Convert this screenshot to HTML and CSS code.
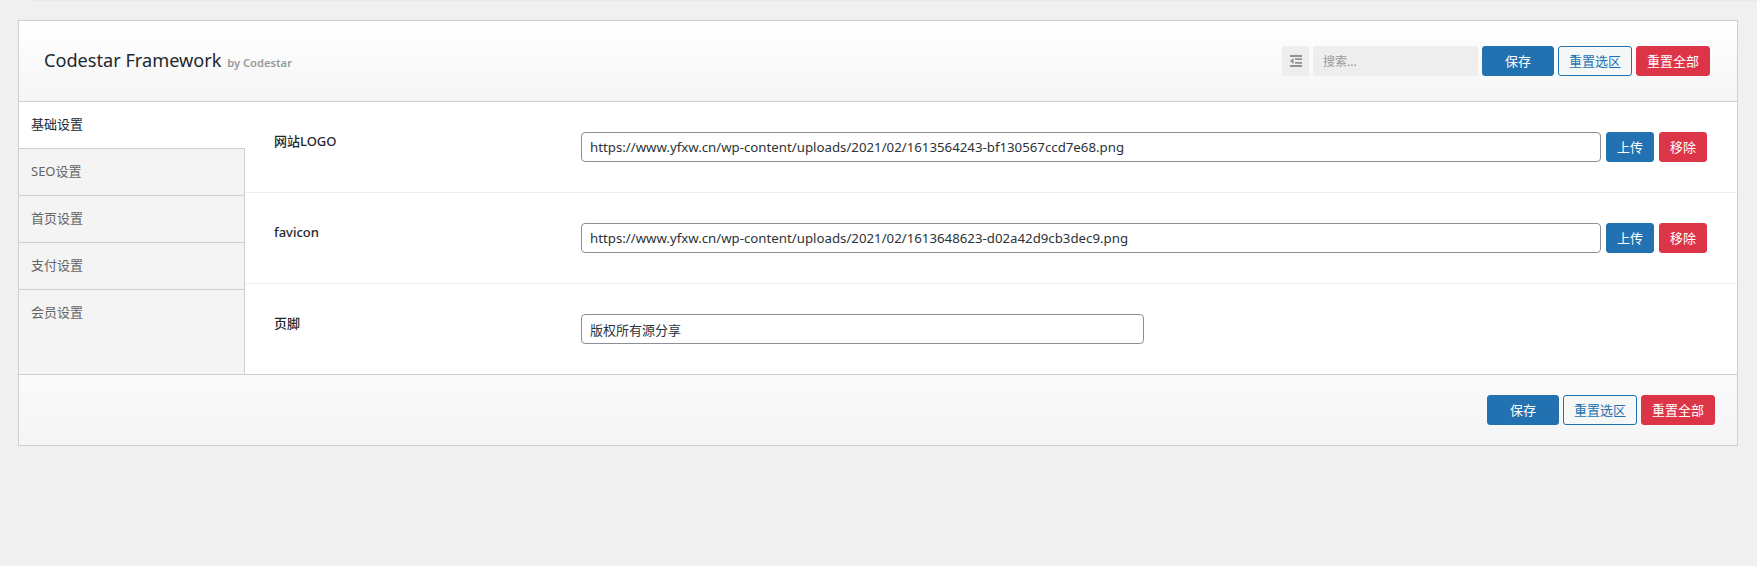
FILE: index.html
```html
<!DOCTYPE html>
<html lang="zh">
<head>
<meta charset="utf-8">
<title>Codestar Framework</title>
<link rel="stylesheet" href="styles.css">
</head>
<body>
<div class="topstrip"></div>
<div class="panel">
  <header class="bar header">
    <h1 class="title">Codestar Framework <small>by Codestar</small></h1>
    <div class="actions">
      <span class="expand"><svg width="12" height="12" viewBox="0 0 12 12"><path d="M0 0h12v2H0zM5 3.3h7v1.8H5zM5 6.9h7v1.8H5zM0 10h12v2H0zM3.6 3v6L0 6z" fill="#919191"/></svg></span>
      <input class="search" type="text" placeholder="搜索...">
      <button class="btn primary wide">保存</button>
      <button class="btn outline">重置选区</button>
      <button class="btn danger">重置全部</button>
    </div>
  </header>
  <div class="body">
    <nav class="side">
      <a class="tab active">基础设置</a>
      <a class="tab">SEO设置</a>
      <a class="tab">首页设置</a>
      <a class="tab">支付设置</a>
      <a class="tab last">会员设置</a>
    </nav>
    <main class="fields">
      <section class="field">
        <div class="label">网站LOGO</div>
        <div class="control">
          <input class="text grow" type="text" value="https://www.yfxw.cn/wp-content/uploads/2021/02/1613564243-bf130567ccd7e68.png">
          <button class="btn primary small">上传</button>
          <button class="btn danger small">移除</button>
        </div>
      </section>
      <section class="field">
        <div class="label">favicon</div>
        <div class="control">
          <input class="text grow" type="text" value="https://www.yfxw.cn/wp-content/uploads/2021/02/1613648623-d02a42d9cb3dec9.png">
          <button class="btn primary small">上传</button>
          <button class="btn danger small">移除</button>
        </div>
      </section>
      <section class="field">
        <div class="label">页脚</div>
        <div class="control">
          <input class="text fixed" type="text" value="版权所有源分享">
        </div>
      </section>
    </main>
  </div>
  <footer class="bar footer">
    <div class="actions">
      <button class="btn primary wide">保存</button>
      <button class="btn outline">重置选区</button>
      <button class="btn danger">重置全部</button>
    </div>
  </footer>
</div>
</body>
</html>
```

FILE: styles.css
```css
* { box-sizing: border-box; }
html, body { margin: 0; padding: 0; }
body {
  min-height: 566px;
  background: #f0f0f1;
  color: #23282d;
  font-family: "Noto Sans", "Noto Sans CJK SC", sans-serif;
  font-size: 13px;
}
.topstrip {
  height: 1px;
  margin-left: 33px;
  background: #e8e8e9;
}
.panel {
  margin: 19px 19px 0 18px;
  border: 1px solid #ccd0d4;
}
.bar { display: flex; align-items: center; }
.header {
  height: 81px;
  justify-content: space-between;
  padding: 0 27px 0 25px;
  border-bottom: 1px solid #ccd0d4;
  background: linear-gradient(#fff, #f5f5f5);
}
.footer {
  height: 71px;
  justify-content: flex-end;
  padding: 0 22px 0 0;
  border-top: 1px solid #ccd0d4;
  background: linear-gradient(#fafafa, #f5f5f5);
}
.title {
  margin: 0;
  font-size: 18.15px;
  font-weight: 400;
  line-height: 26px;
  color: #23282d;
}
.title small {
  font-size: 11.2px;
  font-weight: 600;
  color: #999;
  margin-left: 1px;
}
.actions { display: flex; align-items: center; gap: 4px; }
.expand {
  display: flex;
  align-items: center;
  justify-content: center;
  width: 27px;
  height: 30px;
  background: #eee;
  border-radius: 2px;
}
.search {
  width: 165px;
  height: 30px;
  padding: 0 10px;
  border: 0;
  border-radius: 2px;
  background: #eee;
  font: 12px "Noto Sans", "Noto Sans CJK SC", sans-serif;
}
.search::placeholder { color: #999; }
.btn {
  width: 74px;
  height: 30px;
  padding: 0;
  border: 1px solid transparent;
  border-radius: 3px;
  font: 13px/28px "Noto Sans", "Noto Sans CJK SC", sans-serif;
  cursor: pointer;
}
.btn.wide { width: 72px; }
.btn.small { width: 48px; }
.primary { background: #2271b1; border-color: #2271b1; color: #fff; }
.outline { background: #f6f7f7; border-color: #2271b1; color: #2271b1; }
.danger { background: #dd3548; border-color: #dd3548; color: #fff; }
.body { display: flex; height: 272px; }
.side {
  display: flex;
  flex-direction: column;
  flex: none;
  width: 226px;
  border-right: 1px solid #ccd0d4;
  background: #f4f4f4;
}
.tab {
  display: block;
  height: 47px;
  padding: 12px 12px 0;
  border-bottom: 1px solid #ccd0d4;
  line-height: 21px;
  color: #666;
}
.tab.active {
  margin-right: -1px;
  background: #fff;
  color: #23282d;
}
.tab.last { border-bottom: 0; }
.fields { flex: 1; min-width: 0; background: #fff; }
.field {
  display: flex;
  height: 91px;
  padding: 30px 30px 0 29px;
  border-bottom: 1px solid #eee;
}
.field:last-child { height: 90px; border-bottom: 0; }
.label {
  flex: none;
  width: 307px;
  line-height: 19px;
  font-weight: 500;
  color: #23282d;
}
.control { display: flex; flex: 1; gap: 5px; min-width: 0; }
.text {
  height: 30px;
  padding: 0 8px;
  border: 1px solid #8c8f94;
  border-radius: 4px;
  background: #fff;
  color: #2c3338;
  font: 13px "Noto Sans", "Noto Sans CJK SC", sans-serif;
}
.text.grow { flex: 1; min-width: 0; font-size: 13.25px; }
.text.fixed { width: 563px; }
```
